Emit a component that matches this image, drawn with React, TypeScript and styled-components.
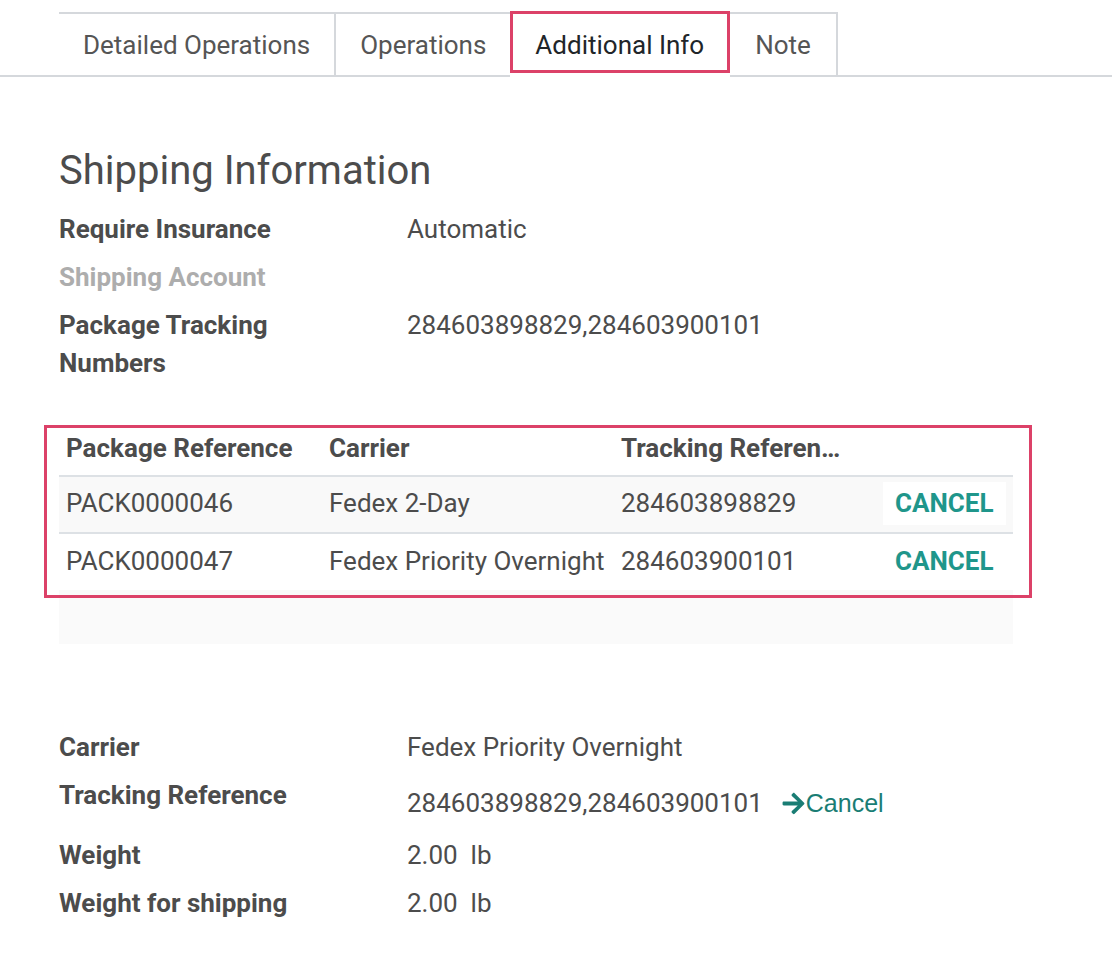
import React from "react";
import styled, { createGlobalStyle } from "styled-components";
import { FaArrowRight } from "react-icons/fa";

const GlobalStyle = createGlobalStyle`
  body {
    margin: 0;
    background: #ffffff;
    font-family: Roboto, "Noto Sans", sans-serif;
    color: #4c4c4c;
  }
`;

const Page = styled.div`
  width: 1112px;
  min-height: 954px;
  background: #fff;
`;

const TabList = styled.div`
  display: flex;
  align-items: flex-end;
  padding: 11px 0 0 59px;
  height: 64px;
  border-bottom: 2px solid #d5d8dc;
`;

const Tab = styled.div<{ $active?: boolean; $pad?: number }>`
  box-sizing: border-box;
  display: flex;
  align-items: center;
  font-size: 26px;
  height: ${(p) => (p.$active ? "62px" : "65px")};
  margin-bottom: ${(p) => (p.$active ? "2px" : "-2px")};
  margin-left: ${(p) => (p.$active ? "-2px" : "0")};
  color: ${(p) => (p.$active ? "#212529" : "#555")};
  background: #fff;
  border: ${(p) => (p.$active ? "3px solid #dc4168" : "2px solid #d5d8dc")};
  border-left: ${(p) => (p.$active ? "3px solid #dc4168" : "none")};
  box-shadow: ${(p) => (p.$active ? "0 4px 0 #fff" : "none")};
  padding: ${(p) => (p.$active ? "5px 23px 0 22px" : `0 ${p.$pad ?? 24}px`)};
`;

const Content = styled.div`
  padding: 70px 0 0 59px;
`;

const Heading = styled.h2`
  margin: 0 0 10px;
  font-size: 40px;
  font-weight: 400;
  line-height: 48px;
  color: #4c4c4c;
`;

const Row = styled.div`
  display: grid;
  grid-template-columns: 348px 1fr;
  align-items: start;
`;

const Label = styled.div<{ $muted?: boolean }>`
  font-size: 26px;
  font-weight: 700;
  line-height: 38px;
  padding: 5px 0;
  width: 230px;
  color: ${(p) => (p.$muted ? "#adadad" : "#4c4c4c")};
`;

const Value = styled.div<{ $offset?: number }>`
  display: flex;
  align-items: center;
  font-size: 26px;
  line-height: 38px;
  padding: ${(p) => (p.$offset ? `${p.$offset}px 0 9px` : "5px 0")};
  color: #4c4c4c;
`;

const CancelLink = styled.a`
  display: inline-flex;
  align-items: center;
  margin-left: 18px;
  font-family: "Liberation Sans", Arial, sans-serif;
  font-size: 25px;
  color: #1a7d74;
  text-decoration: none;

  svg {
    width: 25px;
    height: 25px;
    margin-top: 1px;
  }
`;

const TableArea = styled.div`
  position: relative;
  width: 954px;
  margin-top: 41px;
`;

const Highlight = styled.div`
  position: absolute;
  left: -15px;
  top: -3px;
  width: 988px;
  height: 173px;
  box-sizing: border-box;
  border: 3px solid #dc4168;
  pointer-events: none;
`;

const Table = styled.table`
  width: 100%;
  table-layout: fixed;
  border-collapse: collapse;
  font-size: 26px;
`;

const Th = styled.th<{ $padRight?: number }>`
  box-sizing: border-box;
  height: 48px;
  padding: 0 ${(p) => p.$padRight ?? 7}px 8px 7px;
  text-align: left;
  font-weight: 700;
  line-height: 38px;
  white-space: nowrap;
  overflow: hidden;
  text-overflow: ellipsis;
  border-bottom: 2px solid #dde1e5;
  color: #4c4c4c;
`;

const Tr = styled.tr<{ $striped?: boolean }>`
  background: ${(p) => (p.$striped ? "#f9f9f9" : "#fff")};
  border-bottom: 2px solid #dde1e5;

  &:last-child {
    border-bottom: none;
  }
`;

const Td = styled.td`
  box-sizing: border-box;
  height: 57px;
  padding: 0 7px 3px;
  line-height: 38px;
  white-space: nowrap;
  overflow: hidden;
  color: #4c4c4c;
`;

const CancelButton = styled.button`
  border: none;
  background: #fff;
  padding: 0 12px;
  height: 43px;
  font-family: Roboto, sans-serif;
  font-size: 26px;
  font-weight: 700;
  color: #1f968b;
  text-transform: uppercase;
  cursor: pointer;
`;

const Filler = styled.div`
  height: 54px;
  background: #fafafa;
`;

const CarrierBlock = styled.div`
  margin-top: 79px;
`;

const packages = [
  { ref: "PACK0000046", carrier: "Fedex 2-Day", tracking: "284603898829" },
  { ref: "PACK0000047", carrier: "Fedex Priority Overnight", tracking: "284603900101" },
];

const App: React.FC = () => {
  return (
    <Page>
      <GlobalStyle />
      <TabList>
        <Tab>Detailed Operations</Tab>
        <Tab>Operations</Tab>
        <Tab $active>Additional Info</Tab>
        <Tab $pad={25}>Note</Tab>
      </TabList>

      <Content>
        <Heading>Shipping Information</Heading>
        <Row>
          <Label>Require Insurance</Label>
          <Value>Automatic</Value>
        </Row>
        <Row>
          <Label $muted>Shipping Account</Label>
          <Value />
        </Row>
        <Row>
          <Label>Package Tracking Numbers</Label>
          <Value>284603898829,284603900101</Value>
        </Row>

        <TableArea>
          <Table>
            <colgroup>
              <col style={{ width: 263 }} />
              <col style={{ width: 292 }} />
              <col style={{ width: 262 }} />
              <col style={{ width: 137 }} />
            </colgroup>
            <thead>
              <tr>
                <Th>Package Reference</Th>
                <Th>Carrier</Th>
                <Th $padRight={33}>Tracking Reference</Th>
                <Th />
              </tr>
            </thead>
            <tbody>
              {packages.map((p, i) => (
                <Tr key={p.ref} $striped={i % 2 === 0}>
                  <Td>{p.ref}</Td>
                  <Td>{p.carrier}</Td>
                  <Td>{p.tracking}</Td>
                  <Td>
                    <CancelButton>Cancel</CancelButton>
                  </Td>
                </Tr>
              ))}
            </tbody>
          </Table>
          <Filler />
          <Highlight />
        </TableArea>

        <CarrierBlock>
          <Row>
            <Label>Carrier</Label>
            <Value>Fedex Priority Overnight</Value>
          </Row>
          <Row>
            <Label>Tracking Reference</Label>
            <Value $offset={13}>
              284603898829,284603900101
              <CancelLink href="#">
                <FaArrowRight />
                Cancel
              </CancelLink>
            </Value>
          </Row>
          <Row>
            <Label>Weight</Label>
            <Value>2.00&nbsp; lb</Value>
          </Row>
          <Row>
            <Label>Weight for shipping</Label>
            <Value>2.00&nbsp; lb</Value>
          </Row>
        </CarrierBlock>
      </Content>
    </Page>
  );
};

export default App;
